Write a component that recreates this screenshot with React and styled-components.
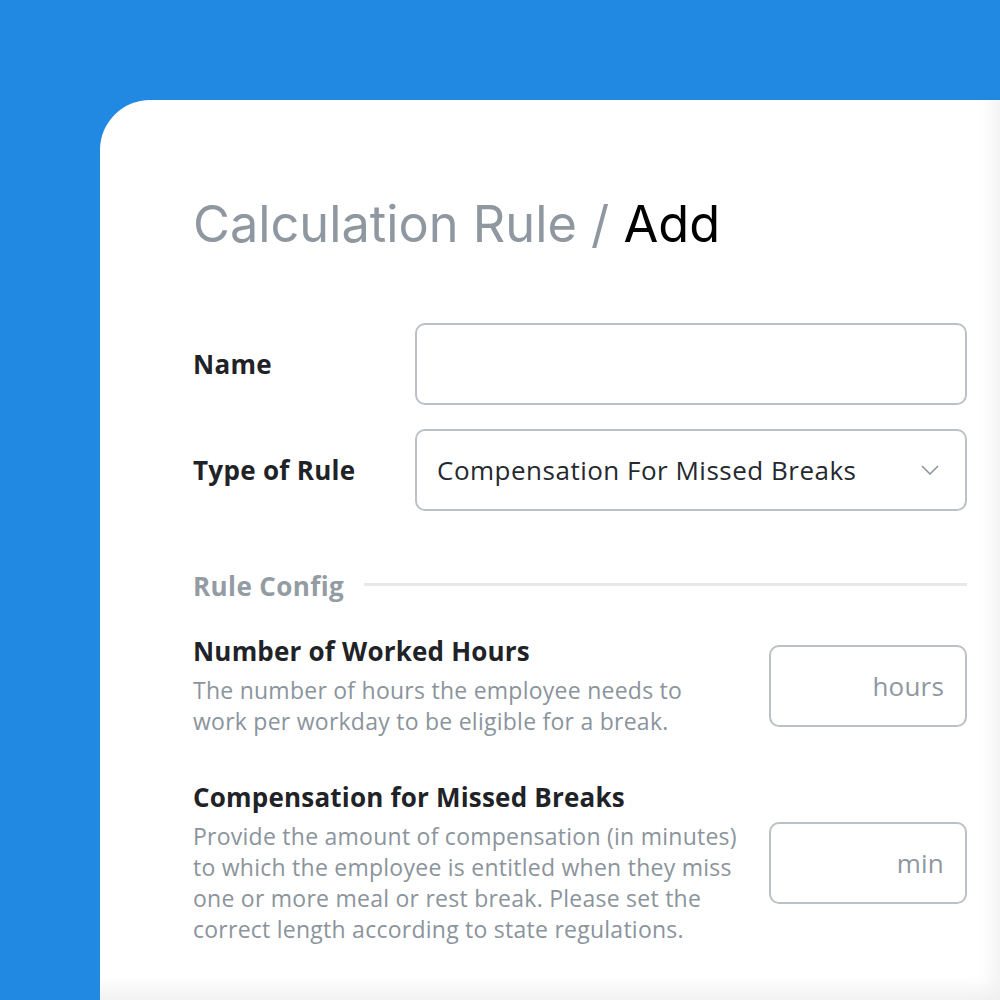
import React from 'react';
import styled, { createGlobalStyle } from 'styled-components';

const GlobalStyle = createGlobalStyle`
  html, body {
    margin: 0;
    padding: 0;
    background: #2189e2;
    overflow: hidden;
  }
  * {
    box-sizing: border-box;
  }
`;

const Page = styled.div`
  padding: 100px 0 0 100px;
  height: 1000px;
`;

const Card = styled.div`
  background: #fff;
  border-top-left-radius: 50px;
  height: 900px;
  padding: 95px 33px 0 93px;
  box-shadow: inset -20px -24px 22px -16px rgba(0, 0, 0, 0.07);
  font-family: "Open Sans", Lato, sans-serif;
`;

const Title = styled.h1`
  margin: 0 0 70px;
  font-family: Inter, sans-serif;
  font-size: 50.5px;
  font-weight: 400;
  line-height: 58px;
  color: #8f98a0;
`;

const Current = styled.span`
  color: #000;
`;

const FieldRow = styled.div`
  display: grid;
  grid-template-columns: 222px 1fr;
  align-items: center;
  margin-bottom: 24px;
`;

const Label = styled.label`
  font-size: 26px;
  font-weight: 700;
  letter-spacing: 0.3px;
  color: #1f2328;
`;

const Box = styled.div`
  display: flex;
  align-items: center;
  justify-content: ${(p) => (p.$align === 'right' ? 'flex-end' : 'space-between')};
  height: 82px;
  padding: 0 ${(p) => (p.$align === 'right' ? '21px' : '26px')} 0 20px;
  border: 2px solid #bcc1c7;
  border-radius: 10px;
  font-size: 26px;
  letter-spacing: ${(p) => (p.$muted ? '0.2px' : '0.5px')};
  color: ${(p) => (p.$muted ? '#8f98a0' : '#25292e')};
`;

const Section = styled.div`
  display: flex;
  align-items: center;
  gap: 20px;
  margin: 58px 0 31px;
`;

const SectionTitle = styled.div`
  font-size: 26px;
  font-weight: 700;
  letter-spacing: 0.4px;
  color: #939ba3;
  line-height: 34px;
`;

const Rule = styled.div`
  flex: 1;
  height: 3px;
  margin-top: -4px;
  background: #e6e8eb;
`;

const ConfigRow = styled.div`
  display: grid;
  grid-template-columns: 1fr 198px;
  column-gap: 24px;
  align-items: center;
  margin-bottom: 43px;
`;

const ConfigTitle = styled.div`
  font-size: 26px;
  font-weight: 700;
  letter-spacing: 0.2px;
  color: #1f2328;
  line-height: 34px;
  margin-bottom: 7px;
`;

const ConfigText = styled.div`
  max-width: 546px;
  font-size: 23px;
  letter-spacing: 0.25px;
  line-height: 31px;
  color: #8b949c;
`;

const Chevron = () => (
  <svg width="18" height="10" viewBox="0 0 18 10" fill="none">
    <path d="M1 1l8 8 8-8" stroke="#8a929a" strokeWidth="1.5" />
  </svg>
);

const configs = [
  {
    title: 'Number of Worked Hours',
    text: 'The number of hours the employee needs to work per workday to be eligible for a break.',
    unit: 'hours',
  },
  {
    title: 'Compensation for Missed Breaks',
    text: 'Provide the amount of compensation (in minutes) to which the employee is entitled when they miss one or more meal or rest break. Please set the correct length according to state regulations.',
    unit: 'min',
  },
];

export default function App() {
  return (
    <Page>
      <GlobalStyle />
      <Card>
        <Title>
          Calculation Rule / <Current>Add</Current>
        </Title>
        <FieldRow>
          <Label>Name</Label>
          <Box />
        </FieldRow>
        <FieldRow>
          <Label>Type of Rule</Label>
          <Box>
            Compensation For Missed Breaks
            <Chevron />
          </Box>
        </FieldRow>
        <Section>
          <SectionTitle>Rule Config</SectionTitle>
          <Rule />
        </Section>
        {configs.map((c) => (
          <ConfigRow key={c.unit}>
            <div>
              <ConfigTitle>{c.title}</ConfigTitle>
              <ConfigText>{c.text}</ConfigText>
            </div>
            <Box $align="right" $muted>{c.unit}</Box>
          </ConfigRow>
        ))}
      </Card>
    </Page>
  );
}
